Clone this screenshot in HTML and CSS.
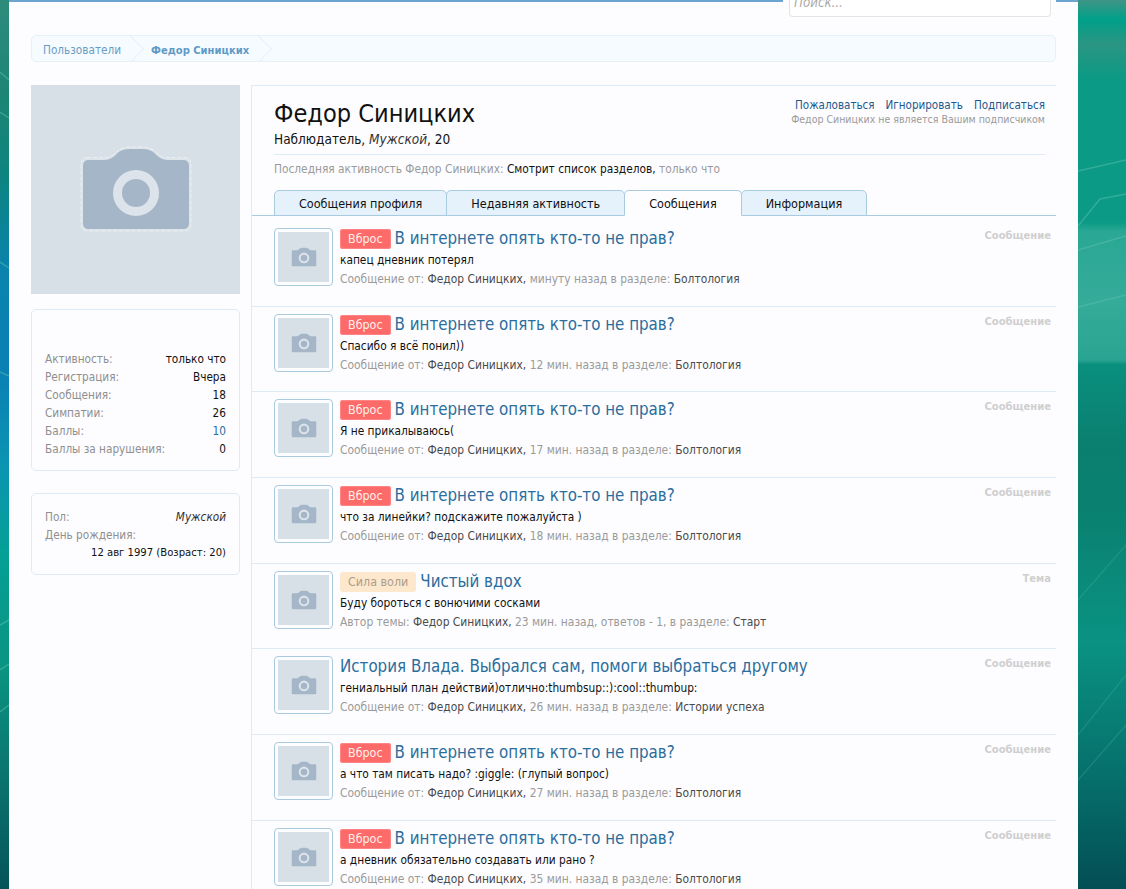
FILE: index.html
```html
<!DOCTYPE html>
<html lang="ru">
<head>
<meta charset="utf-8">
<title>Федор Синицких</title>
<link rel="stylesheet" href="styles.css">
</head>
<body>
<svg class="backdrop" width="1126" height="889" viewBox="0 0 1126 889" aria-hidden="true">
  <defs>
    <linearGradient id="gl" x1="0" y1="0" x2="0" y2="1">
      <stop offset="0" stop-color="#2e8b7c"/>
      <stop offset=".11" stop-color="#1c8574"/>
      <stop offset=".2" stop-color="#0d8480"/>
      <stop offset=".3" stop-color="#0a83ad"/>
      <stop offset=".42" stop-color="#0a80b4"/>
      <stop offset=".52" stop-color="#0a94b2"/>
      <stop offset=".62" stop-color="#05a096"/>
      <stop offset=".75" stop-color="#0a9482"/>
      <stop offset=".9" stop-color="#0a6d6a"/>
      <stop offset="1" stop-color="#05545a"/>
    </linearGradient>
    <linearGradient id="gr" x1="0" y1="0" x2="0" y2="1">
      <stop offset="0" stop-color="#3f9585"/>
      <stop offset=".022" stop-color="#00a08a"/>
      <stop offset=".05" stop-color="#2a9582"/>
      <stop offset=".09" stop-color="#0a9a85"/>
      <stop offset=".25" stop-color="#0a9a85"/>
      <stop offset=".26" stop-color="#2aa795"/>
      <stop offset=".34" stop-color="#35ab9a"/>
      <stop offset=".405" stop-color="#2aa492"/>
      <stop offset=".41" stop-color="#0a8f7e"/>
      <stop offset=".5" stop-color="#0a7f70"/>
      <stop offset=".57" stop-color="#0a8070"/>
      <stop offset=".72" stop-color="#0a9282"/>
      <stop offset=".88" stop-color="#066e6a"/>
      <stop offset="1" stop-color="#034e55"/>
    </linearGradient>
  </defs>
  <rect width="9" height="889" fill="url(#gl)"/>
  <rect x="1078" width="48" height="889" fill="url(#gr)"/>
  <g fill="none" stroke="#5cc0ad" stroke-opacity=".5" stroke-width="1.5">
    <path d="M0 72 L9 80M0 112 L9 118M0 262 L9 268M0 372 L9 376M0 625 L9 620M0 670 L9 664M0 712 L9 705"/>
    <path d="M1078 171 L1126 160M1078 226 L1100 199 L1126 194M1078 250 L1126 236M1078 307 L1126 295"/>
  </g>
  <g fill="none" stroke="#5cc0ad" stroke-opacity=".22" stroke-width="1.5">
    <path d="M1078 600 L1126 545M1078 735 L1126 675M1078 780 L1126 725"/>
  </g>
</svg>
<svg class="sprite" width="0" height="0" aria-hidden="true">
  <symbol id="cam" viewBox="0 0 110 86">
    <path d="M8 14H23C29 14 33 11 36 7.500C39 4.500 43 3 48 3H62C67 3 71 4.500 74 7.500C77 11 81 14 87 14H102C106 14 108 16 108 20V77C108 81 106 83 102 83H8C4 83 2 81 2 77V20C2 16 4 14 8 14Z" fill="#a4b6c7"/>
    <circle cx="55" cy="47" r="18.500" fill="none" stroke="#dce3ea" stroke-width="9"/>
  </symbol>
</svg>
<div class="wrapper">
  <header class="topbar">
    <div class="topline"></div>
    <div class="searchslot"><div class="search">Поиск...</div></div>
    <div class="topline topline-end"></div>
  </header>
  <div class="content">
    <nav class="crumbs">
      <a class="crumb">Пользователи</a>
      <a class="crumb crumb-current">Федор Синицких</a>
    </nav>
    <div class="layout">
      <aside class="side">
        <div class="bigavatar">
          <svg class="bigcam" viewBox="0 0 114 90">
            <path class="halo" d="M8 13.500H25C31 13.500 35 11 38 7.500C41 4.500 45 3 50 3H64C69 3 73 4.500 76 7.500C79 11 83 13.500 89 13.500H106C110 13.500 112 15.500 112 19.500V81C112 85 110 87 106 87H8C4 87 2 85 2 81V19.500C2 15.500 4 13.500 8 13.500Z"/>
            <svg x="2" y="2" width="110" height="86" viewBox="0 0 110 86"><use href="#cam"/></svg>
          </svg>
        </div>
        <div class="card card-stats">
          <div class="pair"><span class="k">Активность:</span><span class="v">только что</span></div>
          <div class="pair"><span class="k">Регистрация:</span><span class="v">Вчера</span></div>
          <div class="pair"><span class="k">Сообщения:</span><span class="v">18</span></div>
          <div class="pair"><span class="k">Симпатии:</span><span class="v">26</span></div>
          <div class="pair"><span class="k">Баллы:</span><span class="v v-link">10</span></div>
          <div class="pair"><span class="k">Баллы за нарушения:</span><span class="v">0</span></div>
        </div>
        <div class="card card-info">
          <div class="pair"><span class="k">Пол:</span><span class="v v-italic">Мужской</span></div>
          <div class="pair"><span class="k">День рождения:</span></div>
          <div class="pair pair-end"><span class="v">12 авг 1997 (Возраст: 20)</span></div>
        </div>
      </aside>
      <main class="main">
        <div class="profile">
          <div class="profile-head">
            <div>
              <h1 class="name">Федор Синицких</h1>
              <p class="role">Наблюдатель, <i>Мужской</i>, 20</p>
            </div>
            <div class="actions">
              <div class="links"><a>Пожаловаться</a><a>Игнорировать</a><a>Подписаться</a></div>
              <div class="follow">Федор Синицких не является Вашим подписчиком</div>
            </div>
          </div>
          <p class="last">Последняя активность Федор Синицких: <b>Смотрит список разделов,</b> только что</p>
        </div>
        <div class="tabs">
          <a class="tab">Сообщения профиля</a>
          <a class="tab">Недавняя активность</a>
          <a class="tab tab-active">Сообщения</a>
          <a class="tab">Информация</a>
        </div>
        <ol class="results">
          <li class="row">
            <div class="thumb"><svg class="cam" viewBox="0 0 110 86"><use href="#cam"/></svg></div>
            <div class="body">
              <h3 class="title"><span class="tag tag-red">Вброс</span>В интернете опять кто-то не прав?</h3>
              <p class="msg">капец дневник потерял</p>
              <p class="meta">Сообщение от: <b>Федор Синицких,</b> минуту назад в разделе: <b>Болтология</b></p>
            </div>
            <span class="kind">Сообщение</span>
          </li>
          <li class="row">
            <div class="thumb"><svg class="cam" viewBox="0 0 110 86"><use href="#cam"/></svg></div>
            <div class="body">
              <h3 class="title"><span class="tag tag-red">Вброс</span>В интернете опять кто-то не прав?</h3>
              <p class="msg">Спасибо я всё понил))</p>
              <p class="meta">Сообщение от: <b>Федор Синицких,</b> 12 мин. назад в разделе: <b>Болтология</b></p>
            </div>
            <span class="kind">Сообщение</span>
          </li>
          <li class="row">
            <div class="thumb"><svg class="cam" viewBox="0 0 110 86"><use href="#cam"/></svg></div>
            <div class="body">
              <h3 class="title"><span class="tag tag-red">Вброс</span>В интернете опять кто-то не прав?</h3>
              <p class="msg">Я не прикалываюсь(</p>
              <p class="meta">Сообщение от: <b>Федор Синицких,</b> 17 мин. назад в разделе: <b>Болтология</b></p>
            </div>
            <span class="kind">Сообщение</span>
          </li>
          <li class="row">
            <div class="thumb"><svg class="cam" viewBox="0 0 110 86"><use href="#cam"/></svg></div>
            <div class="body">
              <h3 class="title"><span class="tag tag-red">Вброс</span>В интернете опять кто-то не прав?</h3>
              <p class="msg">что за линейки? подскажите пожалуйста )</p>
              <p class="meta">Сообщение от: <b>Федор Синицких,</b> 18 мин. назад в разделе: <b>Болтология</b></p>
            </div>
            <span class="kind">Сообщение</span>
          </li>
          <li class="row">
            <div class="thumb"><svg class="cam" viewBox="0 0 110 86"><use href="#cam"/></svg></div>
            <div class="body">
              <h3 class="title"><span class="tag tag-tan">Сила воли</span>Чистый вдох</h3>
              <p class="msg">Буду бороться с вонючими сосками</p>
              <p class="meta">Автор темы: <b>Федор Синицких,</b> 23 мин. назад, ответов - 1, в разделе: <b>Старт</b></p>
            </div>
            <span class="kind">Тема</span>
          </li>
          <li class="row">
            <div class="thumb"><svg class="cam" viewBox="0 0 110 86"><use href="#cam"/></svg></div>
            <div class="body">
              <h3 class="title">История Влада. Выбрался сам, помоги выбраться другому</h3>
              <p class="msg">гениальный план действий)отлично:thumbsup::):cool::thumbup:</p>
              <p class="meta">Сообщение от: <b>Федор Синицких,</b> 26 мин. назад в разделе: <b>Истории успеха</b></p>
            </div>
            <span class="kind">Сообщение</span>
          </li>
          <li class="row">
            <div class="thumb"><svg class="cam" viewBox="0 0 110 86"><use href="#cam"/></svg></div>
            <div class="body">
              <h3 class="title"><span class="tag tag-red">Вброс</span>В интернете опять кто-то не прав?</h3>
              <p class="msg">а что там писать надо? :giggle: (глупый вопрос)</p>
              <p class="meta">Сообщение от: <b>Федор Синицких,</b> 27 мин. назад в разделе: <b>Болтология</b></p>
            </div>
            <span class="kind">Сообщение</span>
          </li>
          <li class="row">
            <div class="thumb"><svg class="cam" viewBox="0 0 110 86"><use href="#cam"/></svg></div>
            <div class="body">
              <h3 class="title"><span class="tag tag-red">Вброс</span>В интернете опять кто-то не прав?</h3>
              <p class="msg">а дневник обязательно создавать или рано ?</p>
              <p class="meta">Сообщение от: <b>Федор Синицких,</b> 35 мин. назад в разделе: <b>Болтология</b></p>
            </div>
            <span class="kind">Сообщение</span>
          </li>
        </ol>
      </main>
    </div>
  </div>
</div>
</body>
</html>
```
FILE: styles.css
```css
* { box-sizing: border-box; }
html, body { height: 889px; overflow: hidden; }
body {
  margin: 0;
  position: relative;
  background: #0a8f80;
  color: #111;
  font-family: "DejaVu Sans", "Liberation Sans", sans-serif;
  font-stretch: condensed;
  font-size: 11.8px;
  line-height: 18px;
}
h1, h3, p, ol { margin: 0; padding: 0; font-weight: normal; }
ol { list-style: none; }
b { font-weight: normal; }
.backdrop { position: absolute; inset: 0; z-index: 0; }
.sprite { position: absolute; }
.wrapper {
  position: relative;
  z-index: 1;
  margin-left: 9px;
  width: 1069px;
  height: 889px;
  background: #fdfdff;
  box-shadow: inset 1px 0 0 #eefcff;
}
.topbar { display: flex; height: 35px; }
.topline { flex: 1; height: 2px; background: #6ba5cf; }
.topline-end { flex: 0 0 22px; }
.searchslot { flex: 0 0 273px; padding: 0 5px 0 6px; }
.search {
  height: 17px;
  border: 1px solid #e4e4e4;
  border-top: 0;
  border-radius: 0 0 4px 4px;
  background: #fff;
  padding-left: 4px;
  color: #aaa;
  font-style: italic;
  font-size: 13.2px;
  line-height: 6px;
}
.content { padding: 0 22px; }
.crumbs {
  display: flex;
  height: 27px;
  border: 1px solid #e7f1f8;
  border-radius: 5px;
  background: #f6fbff;
  overflow: hidden;
}
.crumb {
  position: relative;
  padding: 1px 13px 0 11px;
  margin-right: 6px;
  color: #6a9cc3;
  font-size: 11.7px;
  line-height: 27px;
}
.crumb::after {
  content: "";
  position: absolute;
  right: -6px;
  top: 3px;
  width: 19px;
  height: 19px;
  border-top: 1px solid #e7f1f8;
  border-right: 1px solid #e7f1f8;
  transform: rotate(45deg);
}
.crumb-current { font-size: 11.1px; font-weight: bold; color: #5f9ac6; }
.layout { display: flex; margin-top: 23px; align-items: flex-start; }
.side { flex: 0 0 209px; margin-right: 11px; font-size: 11.7px; }
.bigavatar {
  height: 209px;
  background: #d7e0e7;
  display: flex;
  align-items: center;
  justify-content: center;
}
.bigcam { width: 114px; height: 90px; margin-top: -2px; }
.halo { fill: #dde4ea; stroke: #e9eef2; stroke-width: 1; stroke-dasharray: 4 2; }
.card {
  border: 1px solid #dcebf6;
  border-radius: 5px;
  background: #fdfdff;
  padding: 40px 13px 12px;
  margin-top: 15px;
}
.card-info { margin-top: 22px; padding-top: 14px; padding-bottom: 12px; }
.pair { display: flex; justify-content: space-between; height: 18px; line-height: 18px; }
.pair-end { justify-content: flex-end; font-size: 11.2px; }
.k { color: #8f8f8f; }
.v { color: #111; }
.v-link { color: #2a6f9f; }
.v-italic { font-style: italic; color: #333; }
.main {
  flex: 1;
  height: 900px;
  border-left: 1px solid #dcebf6;
  border-top: 1px solid #dcebf6;
}
.profile { padding: 0 11px 0 22px; }
.profile-head {
  display: flex;
  justify-content: space-between;
  height: 69px;
  border-bottom: 1px solid #dcebf6;
}
.name { font-size: 25.1px; line-height: 30px; margin-top: 13px; color: #111; }
.role { font-size: 13.5px; line-height: 18px; margin-top: 1px; color: #111; }
.role i { color: #333; }
.actions { margin-top: 11px; text-align: right; }
.links { display: flex; justify-content: flex-end; gap: 11px; color: #1f5a8f; font-size: 11.55px; line-height: 17px; }
.follow { color: #9a9a9a; font-size: 10.5px; line-height: 11px; }
.last { color: #9a9a9a; margin-top: 5px; line-height: 18px; }
.last b { color: #111; }
.tabs {
  display: flex;
  margin-top: 12px;
  height: 26px;
  padding-left: 22px;
  border-bottom: 1px solid #a9cbe0;
}
.tab {
  height: 26px;
  padding: 0 24px;
  margin-right: -1px;
  border: 1px solid #a9cbe0;
  border-radius: 5px 5px 0 0;
  background: #e5f2fc;
  color: #111;
  font-size: 12.5px;
  line-height: 26px;
}
.tab-active { background: #fdfdff; border-bottom-color: #fdfdff; position: relative; z-index: 1; }
.results { padding-top: 5px; }
.row {
  display: flex;
  padding: 7px 5px 18.7px 22px;
  border-bottom: 1px solid #dcebf6;
}
.thumb {
  flex: 0 0 59px;
  height: 58px;
  border: 1px solid #a9cbe0;
  border-radius: 4px;
  padding: 3px;
  background: linear-gradient(#d7e0e7, #d7e0e7) content-box;
  display: flex;
}
.cam { width: 26px; height: 20px; margin: auto; }
.body { flex: 1; margin-left: 7px; }
.title { height: 20px; font-size: 16.8px; line-height: 20px; color: #2b6d9c; font-weight: normal; }
.tag {
  display: inline-block;
  vertical-align: top;
  height: 20px;
  margin: 1px 4px 0 0;
  padding: 0 8px;
  border-radius: 3px;
  font-size: 12.4px;
  line-height: 20px;
}
.tag-red { background: #fd6a6a; color: #fff0ea; box-shadow: inset 0 0 0 1px #ff8585; }
.tag-tan { background: #fde8cd; color: #ad9c8b; }
.msg { margin-top: 4px; line-height: 16px; color: #111; }
.meta { margin-top: 3px; line-height: 16px; color: #9a9a9a; font-size: 11.9px; }
.meta b { color: #4a4a4a; }
.kind { color: #cfcfcf; font-size: 11.1px; font-weight: bold; line-height: 16px; }
```
